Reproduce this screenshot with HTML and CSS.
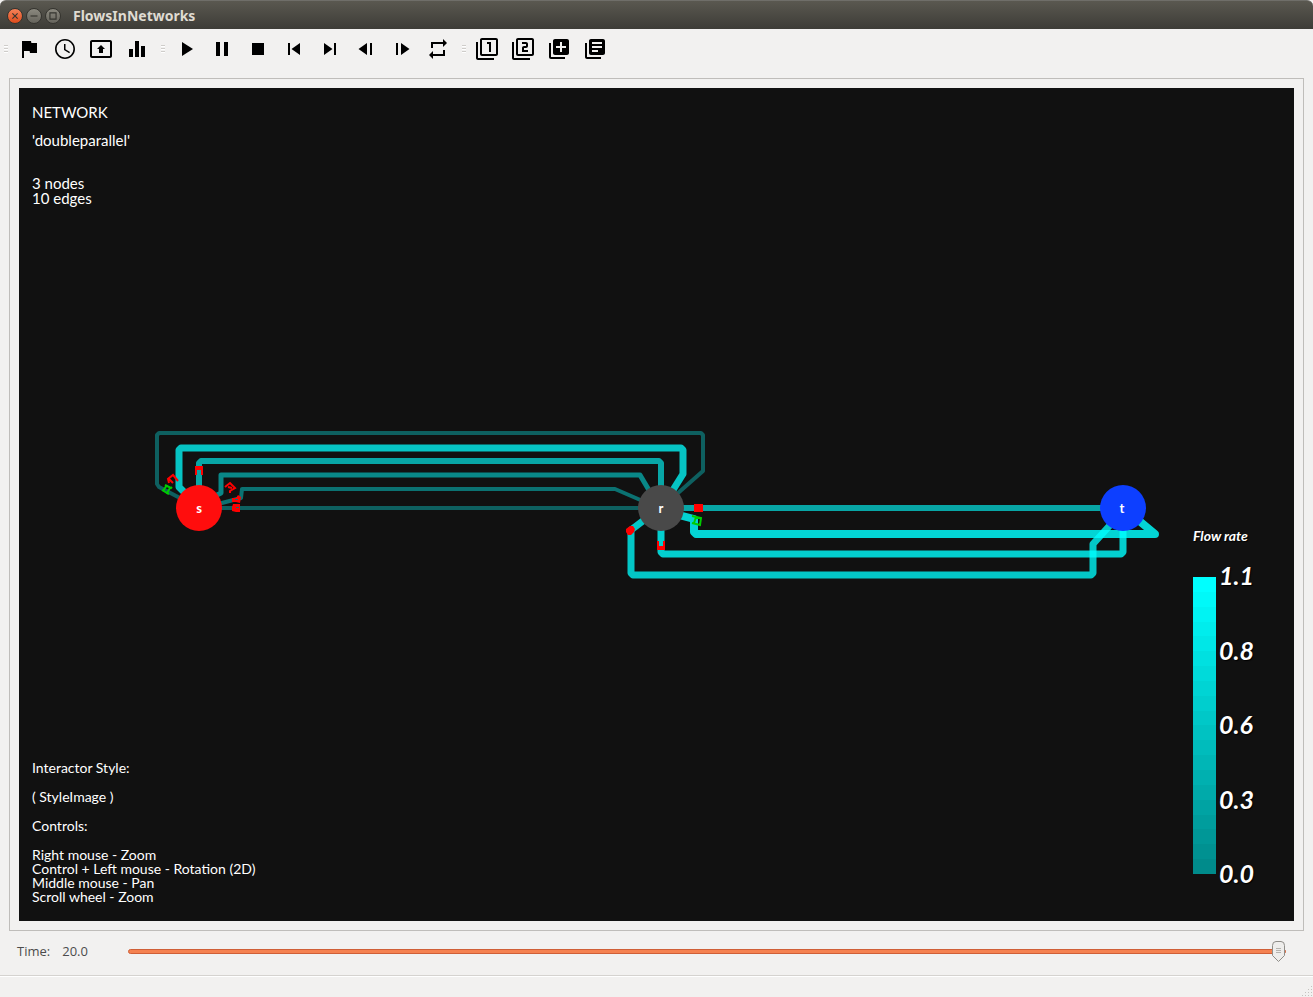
FILE: index.html
```html
<!DOCTYPE html>
<html lang="en">
<head>
<meta charset="utf-8">
<title>FlowsInNetworks</title>
<link rel="stylesheet" href="styles.css">
</head>
<body>
<header class="titlebar">
  <button class="win win-close" type="button" aria-label="Close"><svg viewBox="0 0 16 16"><path d="M5 5l6 6M11 5l-6 6"/></svg></button>
  <button class="win" type="button" aria-label="Minimize"><svg viewBox="0 0 16 16"><path d="M4 8h8"/></svg></button>
  <button class="win" type="button" aria-label="Maximize"><svg viewBox="0 0 16 16"><path d="M4.500 4.500h7v7h-7z"/></svg></button>
  <h1 class="title">FlowsInNetworks</h1>
</header>
<nav class="toolbar" aria-label="Tools">
  <span class="grip grip-first"></span>
  <button class="tool" type="button" aria-label="Flag"><svg viewBox="0 0 24 24"><path d="M14.400 6L14 4H5v17h2v-7h5.600l.4 2h7V6z"/></svg></button>
  <button class="tool" type="button" aria-label="Clock"><svg viewBox="0 0 24 24"><path d="M11.990 2C6.470 2 2 6.480 2 12s4.470 10 9.990 10C17.520 22 22 17.520 22 12S17.520 2 11.990 2zM12 20.400a8.400 8.400 0 1 1 0-16.800 8.400 8.400 0 0 1 0 16.800zM12.500 7H11v6l5.250 3.150.75-1.230-4.500-2.670z"/></svg></button>
  <button class="tool" type="button" aria-label="Present"><svg viewBox="0 0 24 24"><path d="M21 3H3c-1.110 0-2 .89-2 2v14c0 1.110.89 2 2 2h18c1.110 0 2-.89 2-2V5c0-1.110-.89-2-2-2zm0 16.020H3V4.980h18v14.040zM10 12H8l4-4 4 4h-2v4h-4v-4z"/></svg></button>
  <button class="tool" type="button" aria-label="Statistics"><svg viewBox="0 0 24 24"><path d="M10 20h4V4h-4v16zm-6 0h4v-8H4v8zM16 9v11h4V9h-4z"/></svg></button>
  <span class="grip grip-play"></span>
  <button class="tool" type="button" aria-label="Play"><svg viewBox="0 0 24 24"><path d="M8 5v14l11-7z"/></svg></button>
  <button class="tool" type="button" aria-label="Pause"><svg viewBox="0 0 24 24"><path d="M6 19h4V5H6v14zm8-14v14h4V5h-4z"/></svg></button>
  <button class="tool" type="button" aria-label="Stop"><svg viewBox="0 0 24 24"><path d="M6 6h12v12H6z"/></svg></button>
  <button class="tool" type="button" aria-label="Skip to start"><svg viewBox="0 0 24 24"><path d="M6 6h2v12H6zm3.500 6l8.500 6V6z"/></svg></button>
  <button class="tool" type="button" aria-label="Skip to end"><svg viewBox="0 0 24 24"><path d="M6 18l8.500-6L6 6v12zM16 6v12h2V6h-2z"/></svg></button>
  <button class="tool" type="button" aria-label="Step back"><svg viewBox="0 0 24 24"><path d="M13 6v12l-8.500-6zM16 6h2v12h-2z"/></svg></button>
  <button class="tool" type="button" aria-label="Step forward"><svg viewBox="0 0 24 24"><path d="M11 6v12l8.500-6zM6 6h2v12H6z"/></svg></button>
  <button class="tool" type="button" aria-label="Repeat"><svg viewBox="0 0 24 24"><path d="M7 7h10v3l4-4-4-4v3H5v6h2V7zm10 10H7v-3l-4 4 4 4v-3h12v-6h-2v4z"/></svg></button>
  <span class="grip grip-last"></span>
  <button class="tool" type="button" aria-label="View 1"><svg viewBox="0 0 24 24"><path d="M3 5H1v16c0 1.100.9 2 2 2h16v-2H3V5zm11 10h2V5h-4v2h2v8zm7-14H7c-1.100 0-2 .9-2 2v14c0 1.100.9 2 2 2h14c1.100 0 2-.9 2-2V3c0-1.100-.9-2-2-2zm0 16H7V3h14v14z"/></svg></button>
  <button class="tool" type="button" aria-label="View 2"><svg viewBox="0 0 24 24"><path d="M3 5H1v16c0 1.100.9 2 2 2h16v-2H3V5zm18-4H7c-1.100 0-2 .9-2 2v14c0 1.100.9 2 2 2h14c1.100 0 2-.9 2-2V3c0-1.100-.9-2-2-2zm0 16H7V3h14v14zm-4-4h-4v-2h2c1.100 0 2-.89 2-2V7c0-1.110-.9-2-2-2h-4v2h4v2h-2c-1.100 0-2 .89-2 2v4h6v-2z"/></svg></button>
  <button class="tool" type="button" aria-label="Add view"><svg viewBox="0 0 24 24"><path d="M4 6H2v14c0 1.100.9 2 2 2h14v-2H4V6zm16-4H8c-1.100 0-2 .9-2 2v12c0 1.100.9 2 2 2h12c1.100 0 2-.9 2-2V4c0-1.100-.9-2-2-2zm-1 9h-4v4h-2v-4H9V9h4V5h2v4h4v2z"/></svg></button>
  <button class="tool" type="button" aria-label="Log"><svg viewBox="0 0 24 24"><path d="M4 6H2v14c0 1.100.9 2 2 2h14v-2H4V6zm16-4H8c-1.100 0-2 .9-2 2v12c0 1.100.9 2 2 2h12c1.100 0 2-.9 2-2V4c0-1.100-.9-2-2-2zm-1 9H9V9h10v2zm-4 4H9v-2h6v2zm4-8H9V5h10v2z"/></svg></button>
</nav>
<main class="frame">
  <section class="canvas">
    <svg class="graph" viewBox="19 88 1275 833" role="img" aria-label="Network graph">
      <g class="edges">
        <path stroke="#0e6060" stroke-width="4" d="M199 508L159 487L157 484V435L159 433H701L703 435V471L661 508"/>
        <path stroke="#06c4c4" stroke-width="7" d="M190 498L179 487V450L181 448H681L683 450V474L668 498"/>
        <path stroke="#08a6a6" stroke-width="6" d="M199 508V463L201 461H659L661 463V508"/>
        <path stroke="#098888" stroke-width="5" d="M217 495L221 493V475H640L653 497"/>
        <path stroke="#0b7272" stroke-width="4" d="M218 504L241 498L242 489H615L645 502"/>
        <path stroke="#0e6060" stroke-width="4" d="M199 508H661"/>
        <path stroke="#08a6a6" stroke-width="6" d="M661 508H1123"/>
        <path stroke="#00ffff" stroke-opacity=".82" stroke-width="8" d="M675 514L694 519V532L696 534H1155L1137 519"/>
        <path stroke="#00ffff" stroke-opacity=".8" stroke-width="7" d="M661 520V552L663 554H1121L1123 552V520"/>
        <path stroke="#00ffff" stroke-opacity=".77" stroke-width="7" d="M652 514L631 530V573L633 575H1091L1093 573V544L1112 523"/>
      </g>
      <g class="marks">
        <path fill="#f00" d="M195 466h8v9h-2v-5h-4v5h-2zM694 504h9v8h-9zM626 529l4-3h3l2 3-1 3-3 3h-3l-2-3zM657 541h2v5h4v-5h2v9h-8zM232 498l4 0 2-3 3 2-1 6-4-1-4 0zM233 504h7v8h-4l-4-1v-4z"/>
        <path fill="#0b7272" d="M235 499h3v1h-3zM236 507h3v1h-3z"/>
        <path stroke="#f00" d="M169 483l-1-4 5-4 5 6M169 479l4 4M225 487l5-4 5 5-5 3v2M228 487l4 1"/>
        <path stroke="#0c0" d="M163 491l4-6M165 485l6 3 1-1M170 488l-3 5 2 1M167 493l-5-3M692 516l9 2-1 7-8-2M696 517l-2 6"/>
      </g>
      <circle cx="199" cy="508" r="23" fill="#ff0d0d"/>
      <circle cx="661" cy="508" r="23" fill="#494949"/>
      <circle cx="1123" cy="508" r="23" fill="#0d3fff"/>
      <g class="nodes"><text x="199" y="513">s</text><text x="661" y="513">r</text><text x="1122" y="513">t</text></g>
    </svg>
    <div class="info">
      <div class="network">
        <p>NETWORK</p>
        <p>'doubleparallel'</p>
        <p class="counts">3 nodes<br>10 edges</p>
      </div>
      <div class="help">
        <p>Interactor Style:</p>
        <p>( StyleImage )</p>
        <p>Controls:</p>
        <p>Right mouse - Zoom<br>Control + Left mouse - Rotation (2D)<br>Middle mouse - Pan<br>Scroll wheel - Zoom</p>
      </div>
    </div>
    <aside class="legend">
      <h2>Flow rate</h2>
      <div class="scale">
        <div class="bar"></div>
        <div class="ticks"><span>1.1</span><span>0.8</span><span>0.6</span><span>0.3</span><span>0.0</span></div>
      </div>
    </aside>
  </section>
</main>
<div class="timebar">
  <label for="time">Time:</label>
  <output class="value" for="time">20.0</output>
  <input id="time" class="slider" type="range" min="0" max="20" step="0.1" value="20">
</div>
<footer class="status"><svg class="sizegrip" viewBox="0 0 12 12"><path d="M10 1h1v1h-1zM7 4h1v1h-1zM10 4h1v1h-1zM4 7h1v1h-1zM7 7h1v1h-1zM10 7h1v1h-1zM1 10h1v1h-1zM4 10h1v1h-1zM7 10h1v1h-1zM10 10h1v1h-1z"/></svg></footer>
</body>
</html>
```

FILE: styles.css
```css
* { box-sizing: border-box; }
body {
  margin: 0;
  min-height: 100vh;
  display: flex;
  flex-direction: column;
  background: #f2f1f0;
  color: #4c4c4c;
  font-family: "Open Sans", "Noto Sans", sans-serif;
  font-size: 13px;
}
button { padding: 0; border: 0; background: none; }
h1, h2, p { margin: 0; }

.titlebar {
  display: flex;
  align-items: center;
  gap: 3px;
  height: 29px;
  padding: 2px 7px 0;
  border-radius: 6px 6px 0 0;
  border-top: 1px solid #6f6e69;
  background: linear-gradient(#5a5850, #3d3c37);
}
.win {
  width: 16px;
  height: 16px;
  border: 1px solid #35342f;
  border-radius: 50%;
  background: linear-gradient(#8b897f, #66645c);
}
.win-close { background: linear-gradient(#f58259, #df4c1c); }
.win svg { display: block; width: 14px; height: 14px; fill: none; stroke: #35342f; stroke-width: 1.300; }
.title { margin-left: 9px; color: #dfdbd2; font-family: "Noto Sans", sans-serif; font-size: 14px; line-height: 20px; font-weight: 700; }

.toolbar { display: flex; align-items: center; height: 49px; padding: 0 4px 9px; }
.grip {
  width: 4px;
  height: 8px;
  background: repeating-linear-gradient(#cfcdca 0 1px, #fff 1px 2px, transparent 2px 3px);
}
.grip-first { margin-right: 3px; }
.grip-play { margin: 0 3px 0 6px; }
.grip-last { margin: 0 3px 0 6px; }
.tool { width: 36px; height: 36px; display: grid; place-items: center; }
.tool svg { width: 24px; height: 24px; fill: #000; }

.frame { flex: 1; display: flex; margin: 0 9px; padding: 9px; border: 1px solid #bfbdba; }
.canvas {
  position: relative;
  flex: 1;
  display: flex;
  justify-content: space-between;
  background: #111;
  color: #fff;
  font-family: Lato, sans-serif;
}
.graph { position: absolute; inset: 0; width: 100%; height: 100%; }
.edges path { fill: none; stroke-linejoin: round; }
.marks path[stroke] { fill: none; stroke-width: 2; }
.nodes { fill: #fff; font-size: 13px; font-weight: 700; text-anchor: middle; }
.info {
  position: relative;
  display: flex;
  flex-direction: column;
  justify-content: space-between;
  padding: 17px 13px;
  font-size: 14px;
  line-height: 14px;
}
.network { display: flex; flex-direction: column; gap: 13px; font-size: 15px; line-height: 15px; }
.counts { margin-top: 15px; }
.help { display: flex; flex-direction: column; gap: 15px; }
.legend {
  position: relative;
  display: flex;
  flex-direction: column;
  justify-content: flex-end;
  padding: 0 40px 36px 0;
  font-style: italic;
  text-shadow: 1px 1px 1px #000;
}
.legend h2 { margin-bottom: 19px; font-size: 14px; line-height: 16px; font-weight: 700; }
.scale { display: flex; gap: 3px; height: 322px; }
.bar {
  width: 23px;
  margin: 14px 0 11px;
  background: linear-gradient(#00ffff 0 5%, #00f9f9 5% 10%, #00f3f3 10% 15%, #00eded 15% 20%, #00e7e7 20% 25%, #00e0e0 25% 30%, #00dada 30% 35%, #00d4d4 35% 40%, #00cece 40% 45%, #00c8c8 45% 50%, #00c2c2 50% 55%, #00bcbc 55% 60%, #00b6b6 60% 65%, #00b0b0 65% 70%, #00aaaa 70% 75%, #00a3a3 75% 80%, #009d9d 80% 85%, #009797 85% 90%, #009191 90% 95%, #008b8b 95%);
}
.ticks {
  display: flex;
  flex-direction: column;
  justify-content: space-between;
  font-size: 25px;
  line-height: 24px;
  font-weight: 700;
}

.timebar { display: flex; align-items: center; height: 44px; padding: 0 27px 4px 17px; }
.value { width: 66px; margin-left: 12px; }
.slider { -webkit-appearance: none; appearance: none; flex: 1; height: 22px; margin: 0; background: none; }
.slider::-webkit-slider-runnable-track {
  height: 5px;
  border: 1px solid #cf5f37;
  border-radius: 3px;
  background: #f58150;
}
.slider::-webkit-slider-thumb {
  -webkit-appearance: none;
  width: 13px;
  height: 21px;
  margin-top: -9px;
  background: url("data:image/svg+xml,%3Csvg xmlns='http://www.w3.org/2000/svg' viewBox='0 0 13 21'%3E%3Cpath d='M4 .5h5q3.500 0 3.500 4v10l-6 6-6-6v-10q0-4 3.500-4z' fill='%23eeedeb' stroke='%238f8d88'/%3E%3Cpath d='M4 7.500h5M4 9.500h5M4 11.500h5' stroke='%23b5b3af'/%3E%3C/svg%3E") no-repeat;
}
.status {
  display: flex;
  justify-content: flex-end;
  align-items: flex-end;
  height: 22px;
  border-top: 1px solid #d5d3d0;
  box-shadow: inset 0 1px #fff;
}
.sizegrip { width: 12px; height: 12px; fill: #c4c2bf; }
```
